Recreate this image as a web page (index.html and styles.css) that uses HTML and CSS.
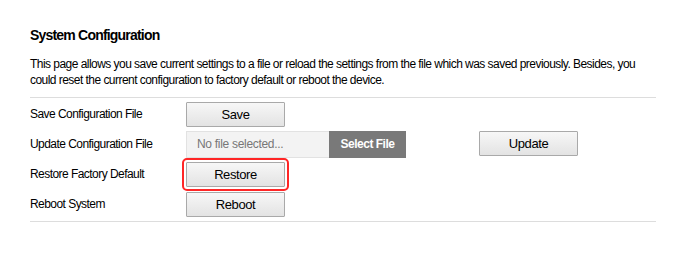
FILE: index.html
```html
<!DOCTYPE html>
<html lang="en">
<head>
    <meta charset="UTF-8">
    <title>System Configuration</title>
    <link rel="stylesheet" href="styles.css">
</head>
<body>
    <div class="panel">
        <h2 class="title">System Configuration</h2>
        <p class="desc">This page allows you save current settings to a file or reload the settings from the file which was saved previously. Besides, you could reset the current configuration to factory default or reboot the device.</p>
        <div class="rows">
            <div class="row">
                <span class="label">Save Configuration File</span>
                <button class="btn">Save</button>
            </div>
            <div class="row">
                <span class="label">Update Configuration File</span>
                <div class="file">
                    <span class="file-name">No file selected...</span>
                    <span class="file-btn">Select File</span>
                </div>
                <button class="btn update">Update</button>
            </div>
            <div class="row">
                <span class="label">Restore Factory Default</span>
                <button class="btn marked">Restore</button>
            </div>
            <div class="row">
                <span class="label">Reboot System</span>
                <button class="btn">Reboot</button>
            </div>
        </div>
    </div>
</body>
</html>
```

FILE: styles.css
```css
* {
    box-sizing: border-box;
    margin: 0;
    padding: 0;
}
body {
    font-family: 'Liberation Sans', Arial, sans-serif;
    background: #fff;
    color: #000;
}
/* Panel */
.panel {
    width: 626px;
    margin-left: 30px;
    padding-top: 27px;
}
.title {
    font-size: 14px;
    font-weight: bold;
    line-height: 17px;
    letter-spacing: -0.8px;
    margin-bottom: 12px;
}
.desc {
    font-size: 12px;
    line-height: 16px;
    letter-spacing: -0.54px;
    padding-bottom: 9px;
    border-bottom: 1px solid #ddd;
}
/* Rows */
.rows {
    padding-top: 1px;
    padding-bottom: 2px;
    border-bottom: 1px solid #ddd;
}
.row {
    display: flex;
    align-items: center;
    height: 30px;
}
.label {
    width: 156px;
    font-size: 12px;
    letter-spacing: -0.55px;
}
.btn {
    width: 99px;
    height: 25px;
    font-family: inherit;
    font-size: 13px;
    letter-spacing: -0.4px;
    color: #000;
    background: linear-gradient(#f7f7f7, #e3e3e3);
    border: 1px solid #a9a9a9;
    border-radius: 1px;
}
.btn.update {
    margin-left: 73px;
    margin-bottom: 2px;
}
.btn.marked {
    outline: 2px solid #ff2626;
    outline-offset: 2px;
}
/* File picker */
.file {
    display: flex;
    height: 27px;
    width: 220px;
    font-size: 12px;
}
.file-name {
    flex: 1;
    display: flex;
    align-items: center;
    padding-left: 10px;
    background: #f3f3f3;
    border: 1px solid #e2e2e2;
    border-right: none;
    color: #777;
    letter-spacing: -0.3px;
}
.file-btn {
    width: 77px;
    display: flex;
    align-items: center;
    justify-content: center;
    background: #797979;
    color: #fff;
    font-weight: bold;
    letter-spacing: -0.5px;
}
```
